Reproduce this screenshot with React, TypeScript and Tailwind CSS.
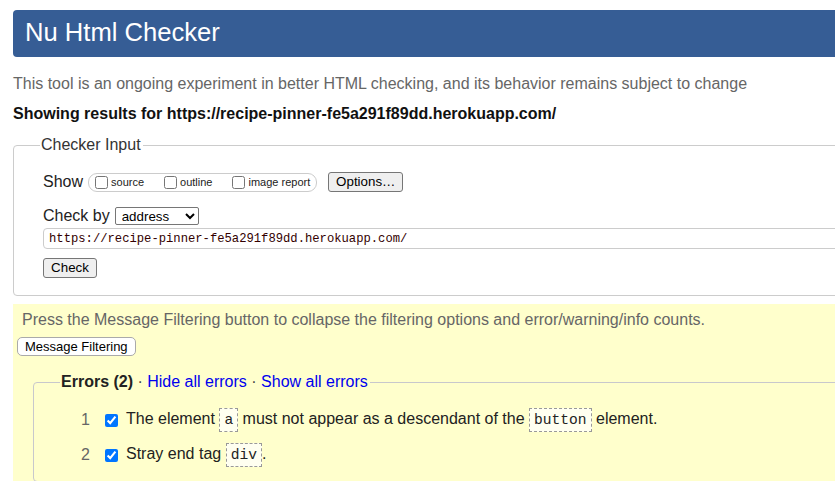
import React from 'react';

const errors = [
  { n: 1, parts: ['The element ', { code: 'a' }, ' must not appear as a descendant of the ', { code: 'button' }, ' element.'] },
  { n: 2, parts: ['Stray end tag ', { code: 'div' }, '.'] },
] as const;

function Code({ children }: { children: React.ReactNode }) {
  return (
    <code className="inline-block h-[24px] border border-dashed border-[#999] bg-[#fffff0] px-[4px] font-['Liberation_Mono',monospace] text-[14.6px] leading-[22px] text-[#222]">
      {children}
    </code>
  );
}

export default function App() {
  return (
    <div className="h-[481px] w-[835px] overflow-hidden bg-white font-['Liberation_Sans',Arial,sans-serif] text-[16px] leading-[18px] text-[#222]">
      <div className="w-[900px] pl-[13px] pt-[10px]">
        <h1 className="h-[47px] rounded-[4px] bg-[#365d95] pl-[12px] text-[25.6px] leading-[45px] text-white">Nu Html Checker</h1>

        <p className="mt-[18px] text-[#666]">
          This tool is an ongoing experiment in better HTML checking, and its behavior remains subject to change
        </p>
        <p className="mt-[12px] font-bold text-[#111]">Showing results for https://recipe-pinner-fe5a291f89dd.herokuapp.com/</p>

        <fieldset className="mt-[13px] rounded-[4px] border border-[#ccc] pb-[17px] pl-[29px]">
          <legend className="ml-[-3px] pl-[1px] pr-[2px] text-[#333]">Checker Input</legend>

          <div className="mt-[18px] flex h-[20px] items-center">
            <span>Show</span>
            <div className="ml-[5px] flex h-[19px] items-center rounded-[9px] border border-[#ccc] pl-[6px] pr-[6px] text-[11px]">
              <label className="flex items-center">
                <input type="checkbox" className="h-[13px] w-[13px]" />
                <span className="ml-[3px]">source</span>
              </label>
              <label className="ml-[20px] flex items-center">
                <input type="checkbox" className="h-[13px] w-[13px]" />
                <span className="ml-[3px]">outline</span>
              </label>
              <label className="ml-[20px] flex items-center">
                <input type="checkbox" className="h-[13px] w-[13px]" />
                <span className="ml-[3px]">image report</span>
              </label>
            </div>
            <button className="ml-[11px] h-[20px] w-[75px] rounded-[3px] border border-[#767676] bg-[#efefef] text-[13.33px] leading-[18px] text-black">
              Options…
            </button>
          </div>

          <div className="mt-[15px] flex h-[18px] items-center">
            <span>Check by</span>
            <select className="ml-[5px] h-[18px] w-[84px] rounded-[2px] border border-[#767676] bg-white pl-[2px] text-[13.33px] text-black" defaultValue="address">
              <option value="address">address</option>
              <option value="file">file upload</option>
              <option value="text">text input</option>
            </select>
          </div>

          <input
            readOnly
            value="https://recipe-pinner-fe5a291f89dd.herokuapp.com/"
            className="mt-[3px] block h-[21px] w-[840px] rounded-[4px] border border-[#ccc] pl-[5px] font-['Liberation_Mono',monospace] text-[12.2px] text-[#300]"
          />

          <button className="mt-[9px] block h-[20px] w-[54px] rounded-[3px] border border-[#767676] bg-[#efefef] text-[13.33px] leading-[18px] text-black">
            Check
          </button>
        </fieldset>

        <div className="mt-[8px] h-[200px] bg-[#ffffcc] px-[4px] pt-[7px]">
          <p className="pl-[5px] text-[#666]">
            Press the Message Filtering button to collapse the filtering options and error/warning/info counts.
          </p>
          <button className="mt-[8px] block h-[19px] rounded-[5px] border border-[#aaa] bg-white px-[7px] text-[13px] leading-[17px] text-black">
            Message Filtering
          </button>

          <fieldset className="ml-[16px] mt-[16px] h-[110px] rounded-[4px] border border-[#c8c8cc] pl-[36px]">
            <legend className="ml-[-10px] pl-[1px] pr-[2px] leading-[20px]">
              <strong className="text-[#222]">Errors (2)</strong>
              <span className="text-[#444]"> · </span>
              <a className="text-[#00e]">Hide all errors</a>
              <span className="text-[#444]"> · </span>
              <a className="text-[#00e]">Show all errors</a>
            </legend>

            <ol className="mt-[16px]">
              {errors.map((e) => (
                <li key={e.n} className="mb-[11px] flex h-[24px] items-center">
                  <span className="w-[20px] text-right text-[#666]">{e.n}</span>
                  <input type="checkbox" defaultChecked className="ml-[15px] h-[13px] w-[13px]" />
                  <span className="ml-[8px] whitespace-pre">
                    {e.parts.map((p, i) => (typeof p === 'string' ? <span key={i}>{p}</span> : <Code key={i}>{p.code}</Code>))}
                  </span>
                </li>
              ))}
            </ol>
          </fieldset>
        </div>
      </div>
    </div>
  );
}
